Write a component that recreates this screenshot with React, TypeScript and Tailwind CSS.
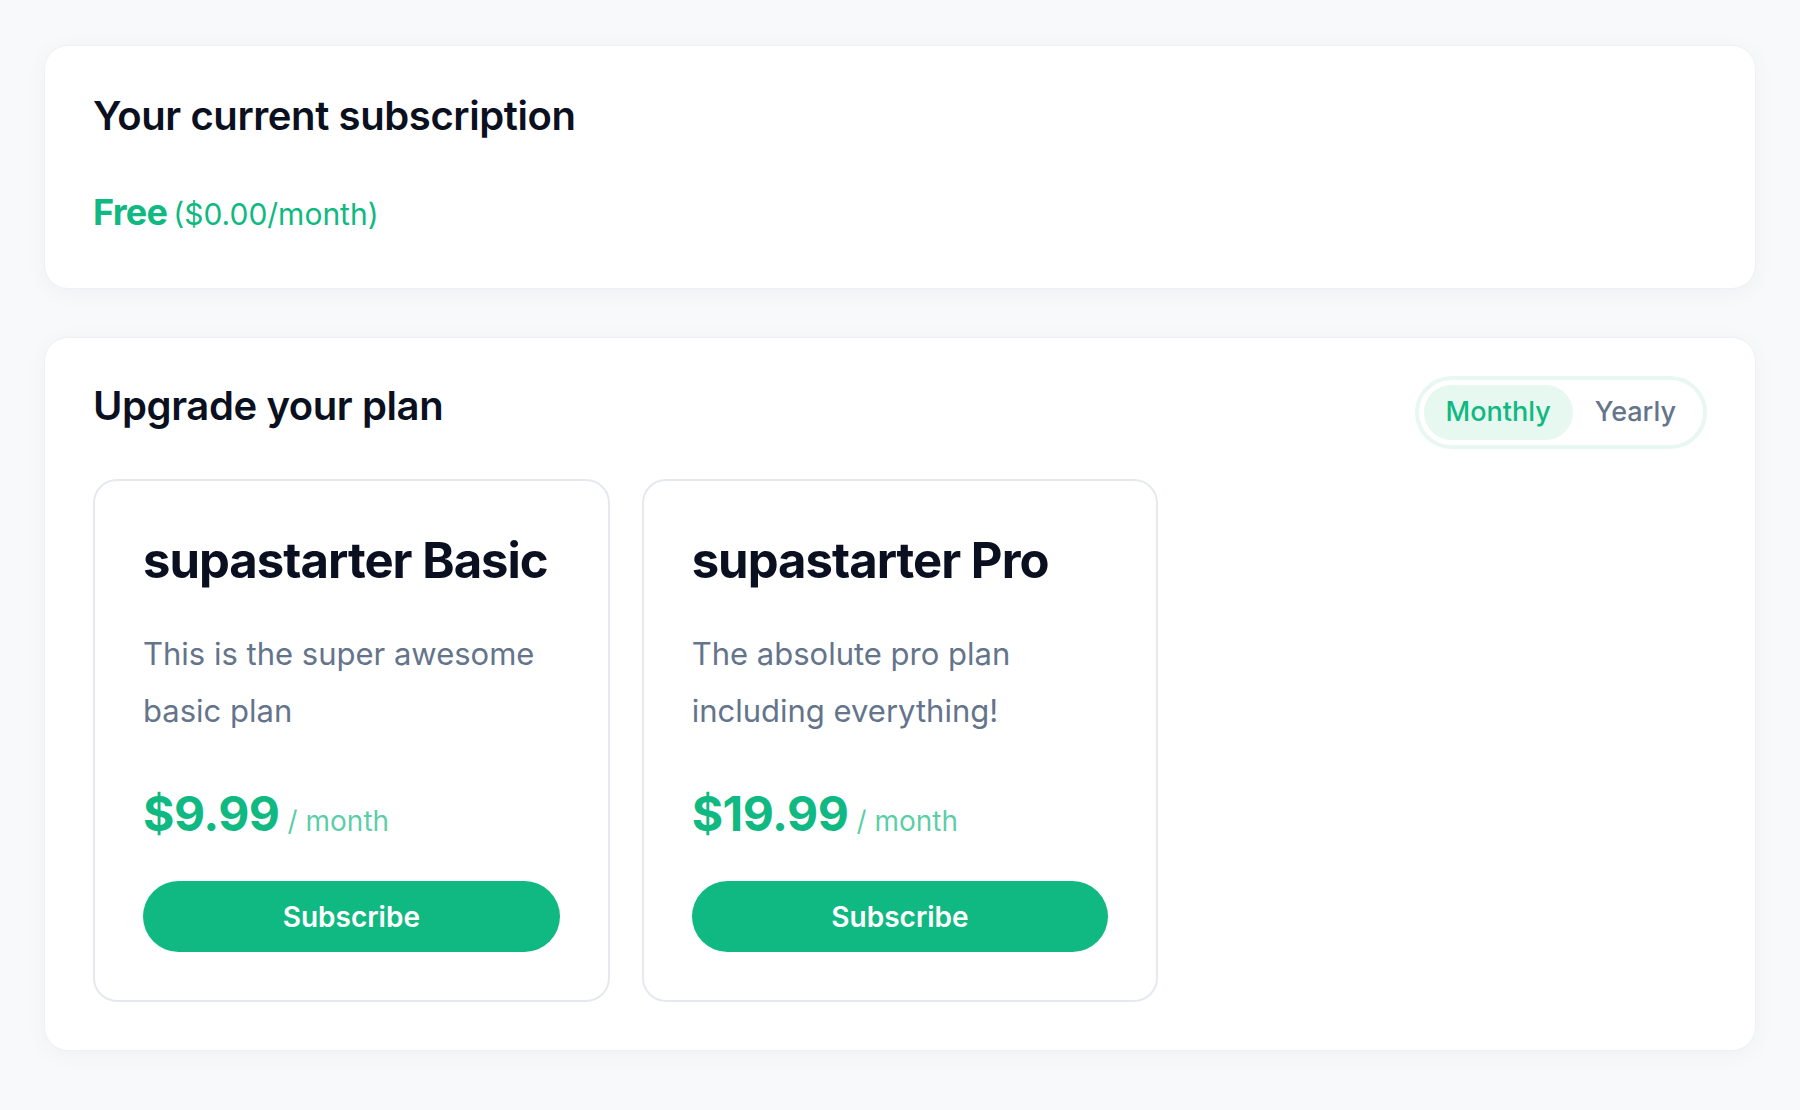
import { useState } from "react";

const plans = [
  {
    name: "supastarter Basic",
    copy: "This is the super awesome basic plan",
    price: "$9.99",
  },
  {
    name: "supastarter Pro",
    copy: "The absolute pro plan including everything!",
    price: "$19.99",
  },
];

export default function App() {
  const [interval, setInterval] = useState<"month" | "year">("month");

  return (
    <div className="min-h-screen bg-[#f8f9fb] px-[44px] py-[45px] font-['Inter',sans-serif] text-[#0b1020]">
      <div className="flex flex-col gap-12">
        <section className="rounded-3xl border border-[#eef0f3] bg-white p-12 pb-[54px] shadow-[0_4px_24px_rgba(15,23,42,0.04)]">
          <h2 className="text-[40px] font-semibold leading-[44px] tracking-[-0.01em]">
            Your current subscription
          </h2>
          <p className="mt-[54px] flex items-baseline gap-[6px] text-[#10b981]">
            <span className="text-[36px] font-bold leading-[40px] tracking-[-0.02em]">Free</span>
            <span className="text-[30px] leading-[40px]">($0.00/month)</span>
          </p>
        </section>

        <section className="rounded-3xl border border-[#eef0f3] bg-white p-12 shadow-[0_4px_24px_rgba(15,23,42,0.04)]">
          <div className="flex items-start justify-between">
            <h2 className="text-[40px] font-semibold leading-[40px] tracking-[-0.01em]">
              Upgrade your plan
            </h2>
            <div className="-mt-[10px] flex rounded-full border-4 border-[#e8f7f1] bg-white p-[5px]">
              <button
                onClick={() => setInterval("month")}
                className={
                  interval === "month"
                    ? "h-[55px] rounded-full bg-[#e7f8f1] px-[22px] text-[27px] font-medium text-[#10b981]"
                    : "h-[55px] rounded-full px-[22px] text-[27px] font-medium text-[#64748b]"
                }
              >
                Monthly
              </button>
              <button
                onClick={() => setInterval("year")}
                className={
                  interval === "year"
                    ? "h-[55px] rounded-full bg-[#e7f8f1] px-[22px] text-[27px] font-medium text-[#10b981]"
                    : "h-[55px] rounded-full px-[22px] text-[27px] font-medium text-[#64748b]"
                }
              >
                Yearly
              </button>
            </div>
          </div>

          <div className="mt-[30px] grid grid-cols-3 gap-8">
            {plans.map((plan) => (
              <article
                key={plan.name}
                className="rounded-3xl border-2 border-[#e5e9ef] bg-white p-12"
              >
                <h3 className="text-[49px] font-bold leading-[64px] tracking-[-0.02em]">
                  {plan.name}
                </h3>
                <p className="mt-8 text-[31px] leading-[57px] text-[#64748b]">{plan.copy}</p>
                <div className="mt-[51px] flex items-baseline gap-2">
                  <span className="text-[48px] font-bold leading-[48px] tracking-[-0.01em] text-[#10b981]">
                    {plan.price}
                  </span>
                  <span className="text-[28px] text-[#10b981]/70">
                    / {interval === "month" ? "month" : "year"}
                  </span>
                </div>
                <button className="mt-[39px] h-[71px] w-full rounded-full bg-[#10b981] text-[28px] font-semibold text-white">
                  Subscribe
                </button>
              </article>
            ))}
          </div>
        </section>
      </div>
    </div>
  );
}
